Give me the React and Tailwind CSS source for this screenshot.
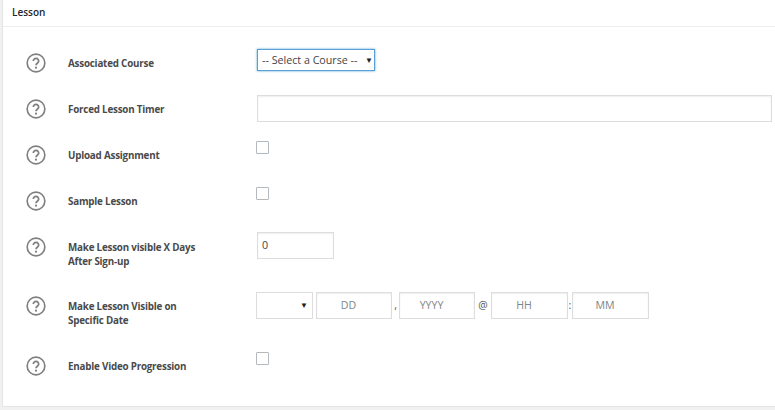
function HelpIcon() {
  return (
    <svg width="20" height="20" viewBox="0 0 24 24" fill="none" stroke="#808080" strokeWidth="2" className="shrink-0">
      <circle cx="12" cy="12" r="10.6" />
      <path d="M8.8 9.6a3.2 3.2 0 0 1 6.4 0.3c0 2.3-3.2 2.5-3.2 4.7" strokeWidth="2.1" />
      <circle cx="12" cy="17.6" r="1.3" fill="#808080" stroke="none" />
    </svg>
  );
}

function Row({ label, height, children }) {
  return (
    <div className={`flex ${height}`}>
      <div className="flex w-[252px] shrink-0 items-start pl-[23px] pt-[13px]">
        <HelpIcon />
        <div className="ml-[22px] mt-[4px] w-[135px] text-[9.8px] font-bold leading-[14px] tracking-[-0.2px] text-[#4a4a4a]">{label}</div>
      </div>
      <div className="flex-1 pt-[9px]">{children}</div>
    </div>
  );
}

function Checkbox() {
  return <input type="checkbox" className="block h-[13px] w-[13px] appearance-none rounded-[1px] border border-[#b4b9be] bg-white" />;
}

function Arrow() {
  return <span className="text-[8px] leading-none text-[#222]">▼</span>;
}

function DatePart({ text, width = "w-[76px]" }) {
  return (
    <div className={`flex h-[27px] ${width} items-center justify-center border border-[#ddd] pr-[11px] text-[10.6px] text-[#80858a] shadow-[inset_0_1px_2px_rgba(0,0,0,0.07)]`}>
      {text}
    </div>
  );
}

function Sep({ children, className }) {
  return <span className={`text-center text-[10.5px] text-[#555] ${className}`}>{children}</span>;
}

export default function App() {
  return (
    <div className="h-[410px] w-[775px] overflow-hidden bg-[#f1f1f1] pl-[2px] font-['Open_Sans',sans-serif]">
      <div className="h-[407px] border-b border-l border-[#e5e5e5] bg-white">
        <div className="flex h-[27px] items-center border-b border-[#eee] pl-[9px] pb-[2px] text-[10px] font-semibold text-[#23282d]">Lesson</div>
        <div className="pt-[13px]">
          <Row label="Associated Course" height="h-[46px]">
            <div className="ml-[2px] flex h-[22px] w-[118px] items-center justify-between whitespace-nowrap border border-[#5b9dd9] pl-[4px] pr-[1px] text-[10.7px] text-[#444] shadow-[0_0_2px_rgba(30,140,190,0.8)]">
              <span>-- Select a Course --</span>
              <Arrow />
            </div>
          </Row>
          <Row label="Forced Lesson Timer" height="h-[46px]">
            <div className="ml-[2px] h-[27px] w-[515px] border border-[#ddd] shadow-[inset_0_1px_2px_rgba(0,0,0,0.07)]" />
          </Row>
          <Row label="Upload Assignment" height="h-[46px]">
            <div className="ml-[1px]"><Checkbox /></div>
          </Row>
          <Row label="Sample Lesson" height="h-[46px]">
            <div className="ml-[1px]"><Checkbox /></div>
          </Row>
          <Row label="Make Lesson visible X Days After Sign-up" height="h-[59px]">
            <div className="ml-[2px] -mt-px flex h-[27px] w-[77px] items-center border border-[#ddd] pl-[4px] text-[10.7px] text-[#444] shadow-[inset_0_1px_2px_rgba(0,0,0,0.07)]">0</div>
          </Row>
          <Row label="Make Lesson Visible on Specific Date" height="h-[60px]">
            <div className="ml-[1px] flex items-center">
              <div className="-mt-px mr-[3px] flex h-[27px] w-[57px] items-center justify-end border border-[#ddd] pr-[4px]"><Arrow /></div>
              <DatePart text="DD" />
              <Sep className="w-[7px]">,</Sep>
              <DatePart text="YYYY" />
              <Sep className="w-[16px]">@</Sep>
              <DatePart text="HH" width="w-[77px]" />
              <Sep className="w-[4px]">:</Sep>
              <DatePart text="MM" width="w-[77px]" />
            </div>
          </Row>
          <Row label="Enable Video Progression" height="h-[50px]">
            <div className="ml-[1px]"><Checkbox /></div>
          </Row>
        </div>
      </div>
    </div>
  );
}
